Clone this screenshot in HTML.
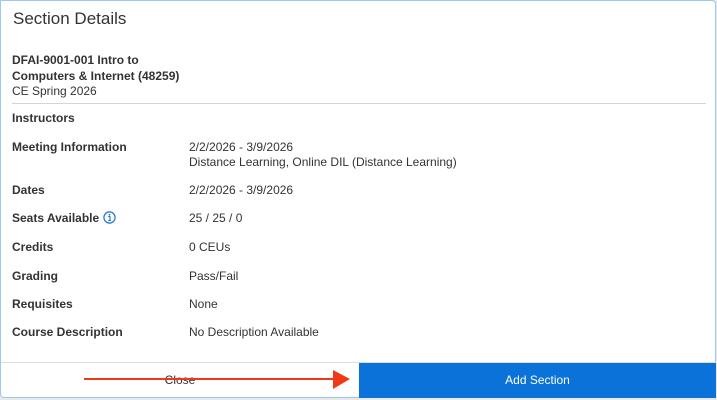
<!DOCTYPE html>
<html><head><style>
body{margin:0;width:717px;height:400px;overflow:hidden;background:#e8e8e8;font-family:"Liberation Sans",sans-serif;position:relative}
.modal{position:absolute;left:0;top:0;width:714px;height:396px;border:1px solid #9cc9f3;border-radius:0 4px 4px 4px;background:#fff}
.title{position:absolute;left:12px;top:8px;font-size:17px;color:#333}
.t{position:absolute;font-size:12px;color:#333}
.b{font-weight:bold;color:#333}
.lbl{position:absolute;left:11px;font-size:12px;font-weight:bold;color:#333}
.val{position:absolute;left:188px;font-size:12px;color:#333;line-height:15px}
.hr{position:absolute;left:11px;top:102px;width:694px;height:1px;background:#d5d5d5}
.foot{position:absolute;left:0;top:361px;width:715px;height:35px;border-top:1px solid #ddd}
.close{position:absolute;left:0;top:0;width:358px;height:35px;text-align:center;line-height:34px;font-size:12px;color:#333}
.add{position:absolute;left:358px;top:0;width:357px;height:35px;background:#0a72d8;color:#fff;text-align:center;line-height:34px;font-size:12px}
</style></head><body>
<div class="modal">
<div class="title">Section Details</div>
<div class="t" style="left:11px;top:52px;line-height:15.5px"><span class="b">DFAI-9001-001 Intro to<br>Computers &amp; Internet (48259)</span><br>CE Spring 2026</div>
<div class="hr"></div>
<div class="lbl" style="top:110px">Instructors</div>
<div class="lbl" style="top:139px">Meeting Information</div>
<div class="val" style="top:139px">2/2/2026 - 3/9/2026<br>Distance Learning, Online DIL (Distance Learning)</div>
<div class="lbl" style="top:182px">Dates</div><div class="val" style="top:182px">2/2/2026 - 3/9/2026</div>
<div class="lbl" style="top:210px">Seats Available <svg width="13" height="13" viewBox="0 0 13 13" style="vertical-align:-2px"><circle cx="6.5" cy="6.5" r="5.6" fill="none" stroke="#1a73d9" stroke-width="1.2"/><circle cx="6.5" cy="3.8" r="0.9" fill="#1a73d9"/><path d="M5.3 5.6h1.7v4M5.3 9.6h2.6" stroke="#1a73d9" stroke-width="1.1" fill="none"/></svg></div><div class="val" style="top:210px">25 / 25 / 0</div>
<div class="lbl" style="top:239px">Credits</div><div class="val" style="top:239px">0 CEUs</div>
<div class="lbl" style="top:268px">Grading</div><div class="val" style="top:268px">Pass/Fail</div>
<div class="lbl" style="top:296px">Requisites</div><div class="val" style="top:296px">None</div>
<div class="lbl" style="top:324px">Course Description</div><div class="val" style="top:324px">No Description Available</div>
<div class="foot"><div class="close">Close</div><div class="add">Add Section</div></div>
</div>
<svg style="position:absolute;left:0;top:0" width="717" height="400"><line x1="84" y1="379" x2="335" y2="379" stroke="#f03a17" stroke-width="2"/><polygon points="333,370 350,379 333,389" fill="#f03a17"/></svg>
</body></html>
